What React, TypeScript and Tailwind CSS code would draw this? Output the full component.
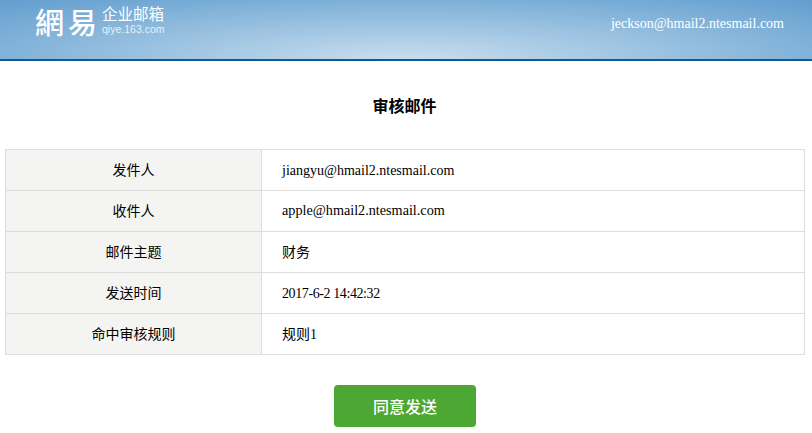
const rows = [
  { label: "发件人", value: "jiangyu@hmail2.ntesmail.com", size: "text-[14px]" },
  { label: "收件人", value: "apple@hmail2.ntesmail.com", size: "text-[14.2px]" },
  { label: "邮件主题", value: "财务", size: "text-[14px]" },
  { label: "发送时间", value: "2017-6-2 14:42:32", size: "text-[14px] tracking-[-0.4px]" },
  { label: "命中审核规则", value: "规则1", size: "text-[14px]" },
];

const serif = "font-['Liberation_Serif','Noto_Sans_CJK_SC',serif]";

export default function App() {
  return (
    <div className={`min-h-screen bg-white text-black ${serif}`}>
      <header className="flex h-[61px] items-start justify-between border-b-2 border-[#115a94] bg-[radial-gradient(ellipse_620px_85px_at_50%_100%,#c8deef_0%,#5c9bcd_100%)] pl-[35px] pr-[28px]">
        <div className="flex items-start text-white">
          <span className="mt-[2px] flex font-['Noto_Sans_CJK_SC',sans-serif] text-[29px] leading-[38px] font-medium">
            <span>網</span>
            <span className="ml-[4px]">易</span>
          </span>
          <div className="ml-[5px] mt-[4px] flex flex-col">
            <span className="font-['Noto_Sans_CJK_SC',sans-serif] text-[15.5px] leading-[19px]">企业邮箱</span>
            <span className="font-['Liberation_Sans',sans-serif] text-[10.5px] leading-[13px] text-[#e6f0f8]">qiye.163.com</span>
          </div>
        </div>
        <span className="mt-[15px] text-[14px] leading-[18px] text-white">jeckson@hmail2.ntesmail.com</span>
      </header>

      <div className="mt-[33px] flex justify-center pr-[3px]">
        <h1 className="font-['Noto_Sans_CJK_SC',serif] text-[16px] leading-[22px] font-bold">审核邮件</h1>
      </div>

      <table className="mx-[5px] mt-[33px] w-[800px] table-fixed border-collapse border border-[#dddddd] text-[14px]">
        <tbody>
          {rows.map((row) => (
            <tr key={row.label} className="h-[41px]">
              <td className="w-[256px] border border-[#dddddd] bg-[#f4f4f2] text-center align-middle">{row.label}</td>
              <td className={`border border-[#dddddd] pl-[20px] align-middle ${row.size}`}>{row.value}</td>
            </tr>
          ))}
        </tbody>
      </table>

      <div className="mt-[30px] flex justify-center pr-[2px]">
        <button className="h-[42px] w-[142px] rounded-[4px] bg-[#4ca832] font-['Noto_Sans_CJK_SC',sans-serif] text-[16px] font-medium text-white">同意发送</button>
      </div>
    </div>
  );
}
